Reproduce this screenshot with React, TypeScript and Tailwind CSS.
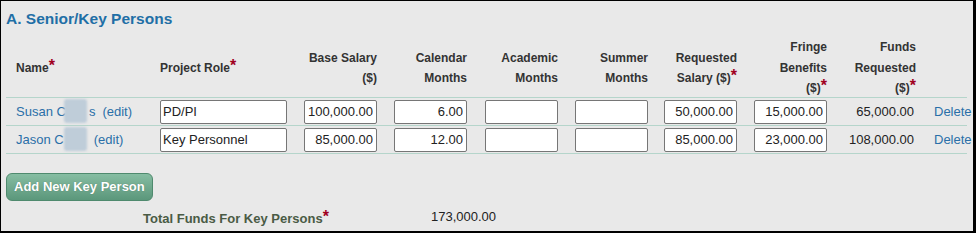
import React from 'react';

// 열 너비 (헤더와 데이터 행 공용)
const cols = {
  name: 'w-[154px]',
  role: 'w-[144px]',
  base: 'w-[90px]',
  cal: 'w-[91px]',
  acad: 'w-[90px]',
  summer: 'w-[89px]',
  req: 'w-[90px]',
  fringe: 'w-[90px]',
  funds: 'w-[78px]',
  del: 'w-[45px]',
};

const Star = () => <span className="text-[#a0001e] text-[16px] leading-none align-[1px]">*</span>;

const Head = ({ w, children, right = true }: { w: string; children: React.ReactNode; right?: boolean }) => (
  <div className={`${w} shrink-0`}>
    <div className={`${right ? 'w-[73px] text-right' : ''} leading-[20.5px]`}>{children}</div>
  </div>
);

const Field = ({ w, value, wide = false, left = false }: { w: string; value: string; wide?: boolean; left?: boolean }) => (
  <div className={`${w} shrink-0`}>
    <input
      readOnly
      value={value}
      className={`${wide ? 'w-[127px]' : 'w-[73px]'} h-[24px] border border-[#767676] rounded-[2px] bg-white text-[13px] text-[#222] outline-none ${
        left ? 'pl-[2px] text-left' : 'pr-[3px] text-right'
      }`}
      style={{ fontFamily: '"Liberation Sans", Arial, sans-serif' }}
    />
  </div>
);

type Person = {
  first: string;
  tail: string;
  role: string;
  base: string;
  cal: string;
  req: string;
  fringe: string;
  funds: string;
};

const people: Person[] = [
  { first: 'Susan C', tail: 's', role: 'PD/PI', base: '100,000.00', cal: '6.00', req: '50,000.00', fringe: '15,000.00', funds: '65,000.00' },
  { first: 'Jason C', tail: '', role: 'Key Personnel', base: '85,000.00', cal: '12.00', req: '85,000.00', fringe: '23,000.00', funds: '108,000.00' },
];

const Row = ({ p }: { p: Person }) => (
  <div className="flex h-[28px] items-center border-b border-[#b5d5cb] text-[13px]">
    <div className={`${cols.name} shrink-0 pl-[10px] text-[#2a6fa8]`}>
      <span className="relative">
        {p.first}
        <span className="inline-block w-[23px]" />
        {p.tail}
        {/* 이름 가림 처리 */}
        <span className="absolute left-[48px] top-[-5px] h-[24px] w-[23px] rounded-[3px] bg-[#bfcdd9] blur-[1px]" />
      </span>
      <span className="ml-[7px]">(edit)</span>
    </div>
    <Field w={cols.role} value={p.role} wide left />
    <Field w={cols.base} value={p.base} />
    <Field w={cols.cal} value={p.cal} />
    <Field w={cols.acad} value="" />
    <Field w={cols.summer} value="" />
    <Field w={cols.req} value={p.req} />
    <Field w={cols.fringe} value={p.fringe} />
    <div className={`${cols.funds} shrink-0 pr-[8px] text-right text-[#222]`}>{p.funds}</div>
    <div className={`${cols.del} shrink-0 pl-[12px] text-[#2a6fa8]`}>Delete</div>
  </div>
);

export default function App() {
  return (
    <div
      className="h-[233px] w-[976px] overflow-hidden border-b-2 border-l border-r-[3px] border-t border-black bg-[#e9e9e9]"
      style={{ fontFamily: '"Liberation Sans", Arial, sans-serif' }}
    >
      <div className="h-[29px] pl-[5px] pt-[9px] text-[15.5px] font-bold leading-[18px] text-[#1f6fa6]">
        A. Senior/Key Persons
      </div>

      <div className="ml-[5px] w-[961px]">
        {/* 헤더 */}
        <div className="flex h-[68px] items-center border-b border-[#b5d5cb] pt-[9px] text-[12px] font-bold text-[#333]">
          <Head w={`${cols.name} pl-[10px]`} right={false}>
            Name<Star />
          </Head>
          <Head w={cols.role} right={false}>
            Project Role<Star />
          </Head>
          <Head w={cols.base}>
            Base Salary
            <br />($)
          </Head>
          <Head w={cols.cal}>
            Calendar
            <br />Months
          </Head>
          <Head w={cols.acad}>
            Academic
            <br />Months
          </Head>
          <Head w={cols.summer}>
            Summer
            <br />Months
          </Head>
          <Head w={cols.req}>
            Requested
            <br />Salary ($)<Star />
          </Head>
          <Head w={cols.fringe}>
            Fringe
            <br />Benefits
            <br />($)<Star />
          </Head>
          <div className={`${cols.funds} shrink-0 pr-[6px] text-right leading-[20.5px]`}>
            Funds
            <br />Requested
            <br />($)<Star />
          </div>
          <div className={`${cols.del} shrink-0`} />
        </div>

        {people.map((p) => (
          <Row key={p.first} p={p} />
        ))}
      </div>

      <button className="ml-[5px] mt-[19px] h-[28px] rounded-[6px] border border-[#4f8a6e] bg-gradient-to-b from-[#86bda2] to-[#5b977b] px-[7px] text-[13px] font-bold text-white [text-shadow:0_0_1px_rgba(0,0,0,0.3)]">
        Add New Key Person
      </button>

      <div className="mt-[8px] flex text-[13px] leading-[16px]">
        <div className="ml-[142px] w-[288px] font-bold text-[#4a5b45]">
          Total Funds For Key Persons<Star />
        </div>
        <div className="text-[#222]">173,000.00</div>
      </div>
    </div>
  );
}
